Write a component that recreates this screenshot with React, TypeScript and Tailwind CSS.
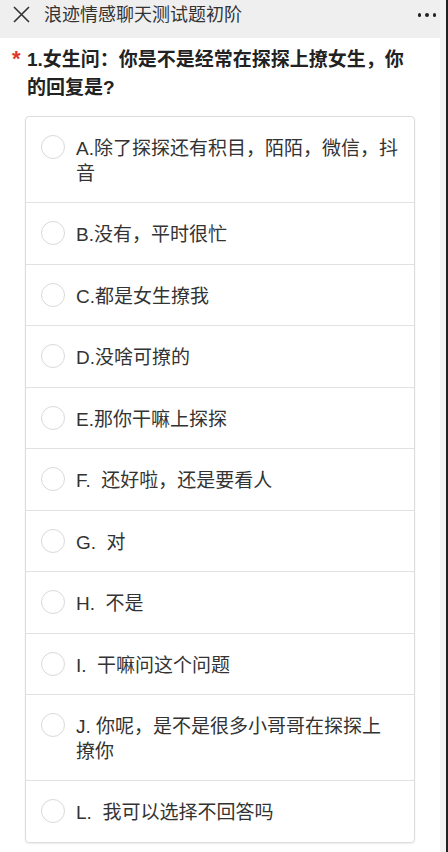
const OPTIONS = [
  "A.除了探探还有积目，陌陌，微信，抖音",
  "B.没有，平时很忙",
  "C.都是女生撩我",
  "D.没啥可撩的",
  "E.那你干嘛上探探",
  "F.  还好啦，还是要看人",
  "G.  对",
  "H.  不是",
  "I.  干嘛问这个问题",
  "J. 你呢，是不是很多小哥哥在探探上撩你",
  "L.  我可以选择不回答吗",
];

const FONT = "font-['Liberation_Sans','Noto_Sans_CJK_SC',sans-serif]";

function CloseIcon() {
  return (
    <svg width="17" height="17" viewBox="0 0 17 17" fill="none">
      <path d="M1 1L16 16M16 1L1 16" stroke="#333" strokeWidth="1.6" />
    </svg>
  );
}

export default function App() {
  return (
    <div className={`flex h-[852px] w-[448px] overflow-hidden bg-white ${FONT}`}>
      <div className="flex min-w-0 flex-1 flex-col">
        {/* top bar */}
        <header className="flex h-[38px] items-start bg-[#efeff0] pt-[4px]">
          <div className="ml-[13px] mt-[2px]">
            <CloseIcon />
          </div>
          <h1 className="ml-[14px] text-[18px] leading-[22px] text-[#333]">
            浪迹情感聊天测试题初阶
          </h1>
          <div className="ml-auto mr-[4px] mt-[9px] flex gap-[4px]">
            <span className="h-[3.5px] w-[3.5px] rounded-full bg-[#222]" />
            <span className="h-[3.5px] w-[3.5px] rounded-full bg-[#222]" />
            <span className="h-[3.5px] w-[3.5px] rounded-full bg-[#222]" />
          </div>
        </header>

        {/* question */}
        <div className="flex pl-[12px] pr-[20px] pt-[8px]">
          <span className="w-[15px] shrink-0 text-[22px] font-bold leading-[26px] text-[#e0352b]">*</span>
          <p className="text-[19px] font-bold leading-[28px] text-[#222]">
            1.女生问：你是不是经常在探探上撩女生，你的回复是?
          </p>
        </div>

        {/* options */}
        <ul className="ml-[25px] mr-[25px] mt-[14px] overflow-hidden rounded-[4px] border border-[#dcdcdc] shadow-[0_1px_2px_rgba(0,0,0,0.08)]">
          {OPTIONS.map((label, i) => (
            <li
              key={label}
              className={`flex items-start pb-[16px] pl-[15px] pr-[14px] pt-[18px] ${
                i > 0 ? "border-t border-[#e2e2e2]" : ""
              }`}
            >
              <span className="h-[24px] w-[24px] shrink-0 rounded-full border border-[#d9d9d9] bg-white" />
              <span className="ml-[11px] whitespace-pre-wrap pt-[2px] text-[19px] leading-[24.5px] text-[#333]">
                {label}
              </span>
            </li>
          ))}
        </ul>
      </div>
      <div className="w-[6px] bg-[#f3f3f3]" />
      <div className="w-[2px] bg-[#222]" />
    </div>
  );
}
